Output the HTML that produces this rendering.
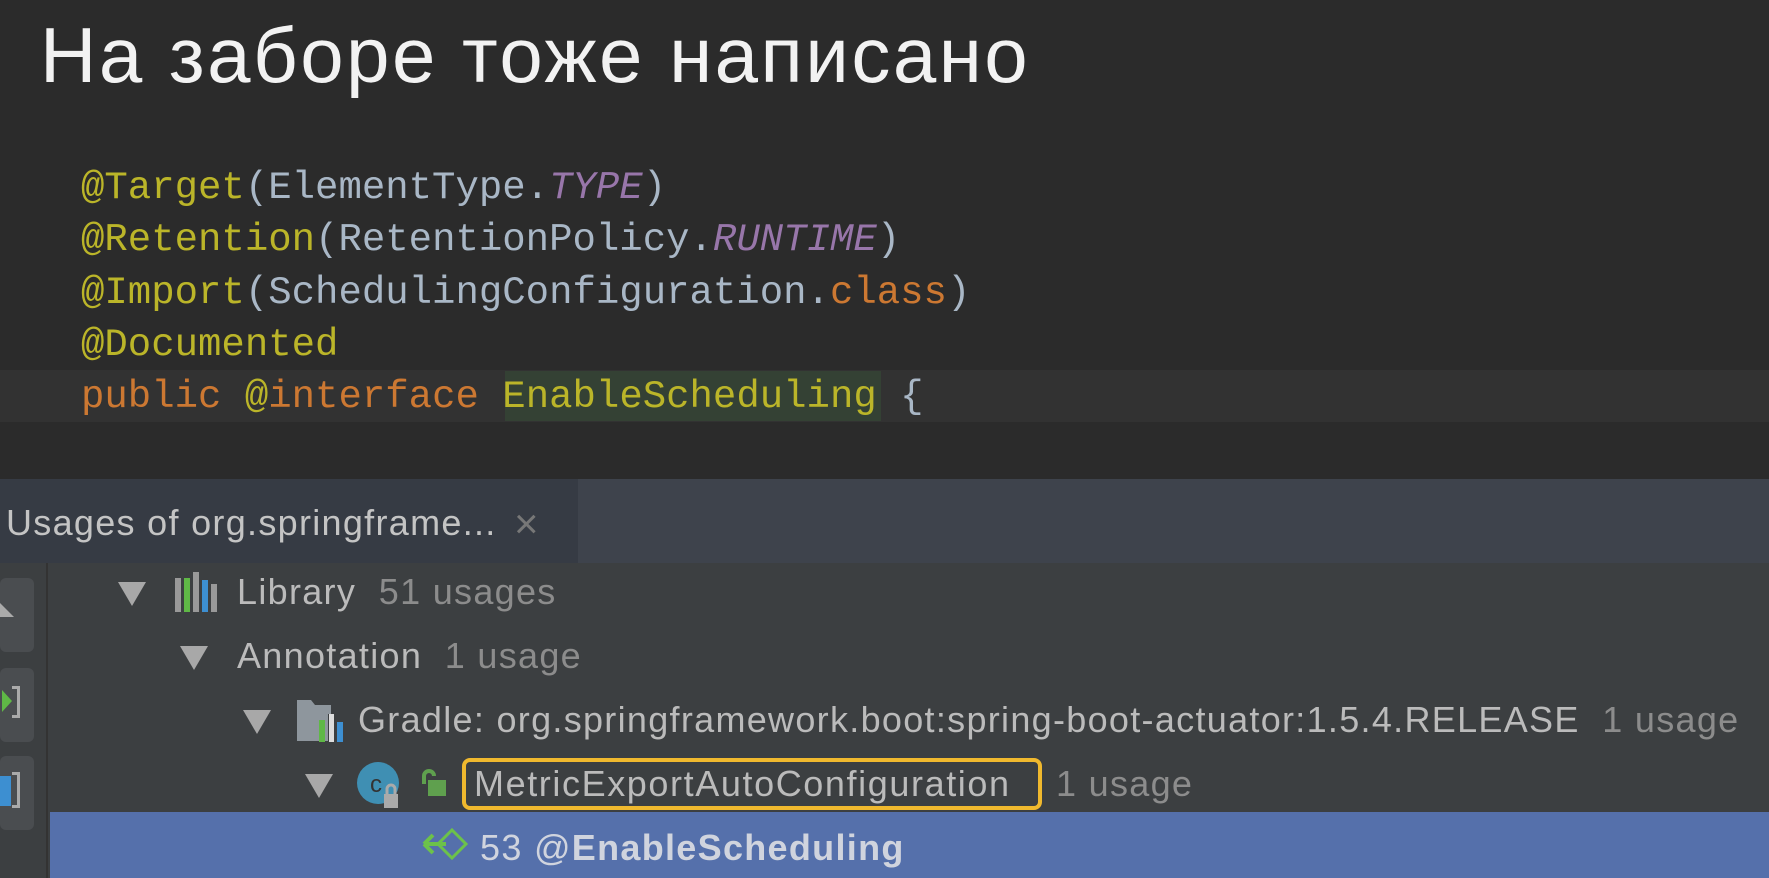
<!DOCTYPE html>
<html><head><meta charset="utf-8"><style>
*{margin:0;padding:0;box-sizing:border-box}
body{width:1769px;height:878px;overflow:hidden;background:#2b2b2b;position:relative;font-family:"Liberation Sans",sans-serif}
.a{position:absolute;white-space:nowrap}
.title{left:40px;top:10px;font-size:78px;color:#f2f2f2;letter-spacing:2.5px;line-height:90px}
.code{font-family:"Liberation Mono",monospace;font-size:39px;color:#a9b7c6;line-height:52px;left:81px}
.an{color:#bbb529}.kw{color:#cc7832}.st{color:#9876aa;font-style:italic}
.t{font-size:36px;color:#bbbbbb;letter-spacing:1.3px;line-height:40px}
.g{color:#8c8c8c}
.tri{width:0;height:0;border-left:14px solid transparent;border-right:14px solid transparent;border-top:24px solid #a8a8a8}
</style></head><body>
<div class="a title">На заборе тоже написано</div>
<div class="a" style="left:0;top:370px;width:1769px;height:52px;background:#323232"></div>
<div class="a" style="left:505px;top:371px;width:376px;height:50px;background:#344134"></div>
<div class="a code" style="top:162px"><span class="an">@Target</span>(ElementType.<span class="st">TYPE</span>)</div>
<div class="a code" style="top:214px"><span class="an">@Retention</span>(RetentionPolicy.<span class="st">RUNTIME</span>)</div>
<div class="a code" style="top:267px"><span class="an">@Import</span>(SchedulingConfiguration.<span class="kw">class</span>)</div>
<div class="a code" style="top:319px"><span class="an">@Documented</span></div>
<div class="a code" style="top:371px"><span class="kw">public</span> <span style="color:#bbb529">@</span><span class="kw">interface</span> <span class="an">EnableScheduling</span> {</div>

<div class="a" style="left:0;top:479px;width:1769px;height:84px;background:#3e434c"></div>
<div class="a" style="left:0;top:479px;width:578px;height:84px;background:#363b44"></div>
<div class="a t" style="left:6px;top:503px;color:#c4c4c4">Usages of org.springframe...</div>
<div class="a" style="left:514px;top:504px;font-size:42px;color:#777;line-height:40px">×</div>
<div class="a" style="left:0;top:563px;width:1769px;height:315px;background:#3c3f41"></div>
<div class="a" style="left:0;top:563px;width:48px;height:315px;background:#3c3f41;border-right:2px solid #333"></div>
<div class="a" style="left:0;top:578px;width:34px;height:74px;background:#4a4d50;border-radius:6px"></div>
<div class="a" style="left:0;top:603px;width:0;height:0;border-left:14px solid #aaa;border-top:14px solid transparent;border-bottom:0"></div>
<div class="a" style="left:0;top:668px;width:34px;height:74px;background:#4a4d50;border-radius:6px"></div>
<div class="a" style="left:2px;top:690px;border-left:10px solid #5fb846;border-top:11px solid transparent;border-bottom:11px solid transparent"></div>
<div class="a" style="left:12px;top:686px;width:8px;height:32px;border:3px solid #aaa;border-left:none"></div>
<div class="a" style="left:0;top:756px;width:34px;height:74px;background:#4a4d50;border-radius:6px"></div>
<div class="a" style="left:0;top:776px;width:11px;height:30px;background:#3d8fd1"></div>
<div class="a" style="left:12px;top:772px;width:8px;height:36px;border:3px solid #aaa;border-left:none"></div>

<div class="a" style="left:50px;top:812px;width:1719px;height:66px;background:#5570ab"></div>

<div class="a tri" style="left:118px;top:582px"></div>
<svg class="a" style="left:175px;top:572px" width="48" height="42"><rect x="0" y="6" width="6" height="34" fill="#999"/><rect x="9" y="6" width="6" height="34" fill="#5fb846"/><rect x="18" y="0" width="6" height="40" fill="#999"/><rect x="27" y="8" width="6" height="32" fill="#3d8fd1"/><rect x="36" y="12" width="6" height="28" fill="#999"/></svg>
<div class="a t" style="left:237px;top:572px">Library <span class="g">&nbsp;51 usages</span></div>
<div class="a tri" style="left:180px;top:646px"></div>
<div class="a t" style="left:237px;top:636px">Annotation <span class="g">&nbsp;1 usage</span></div>
<div class="a tri" style="left:243px;top:710px"></div>
<svg class="a" style="left:297px;top:698px" width="52" height="44"><path d="M0 2h14l4 5h16v36H0z" fill="#8e969d"/><rect x="22" y="22" width="6" height="22" fill="#5fb846"/><rect x="31" y="16" width="6" height="28" fill="#3c3f41"/><rect x="32" y="16" width="5" height="28" fill="#ddd"/><rect x="40" y="24" width="6" height="20" fill="#3d8fd1"/></svg>
<div class="a t" style="left:358px;top:700px">Gradle: org.springframework.boot:spring-boot-actuator:1.5.4.RELEASE <span class="g">&nbsp;1 usage</span></div>
<div class="a tri" style="left:305px;top:774px"></div>
<svg class="a" style="left:356px;top:760px" width="52" height="50"><circle cx="22" cy="23" r="21" fill="#3f8fb3"/><text x="14" y="32" font-family="Liberation Sans" font-size="24" fill="#333">c</text><rect x="28" y="34" width="14" height="14" fill="#aaa"/><path d="M31 34v-5a4 4 0 0 1 8 0v5" stroke="#aaa" stroke-width="3" fill="none"/></svg>
<svg class="a" style="left:420px;top:768px" width="28" height="30"><rect x="8" y="12" width="18" height="16" fill="#5fa04e"/><path d="M4 16v-8a5 5 0 0 1 10 0" stroke="#5fa04e" stroke-width="4" fill="none"/></svg>
<div class="a" style="left:462px;top:758px;width:580px;height:52px;border:4px solid #f0b92e;border-radius:8px"></div>
<div class="a t" style="left:474px;top:764px;letter-spacing:1.6px">MetricExportAutoConfiguration</div>
<div class="a t g" style="left:1056px;top:764px">1 usage</div>
<svg class="a" style="left:420px;top:828px" width="48" height="36"><path d="M4 16h22M4 16l9-9M4 16l9 9" stroke="#6cc24a" stroke-width="4" fill="none"/><path d="M32 2l14 14-14 14-14-14z" stroke="#6cc24a" stroke-width="3" fill="none"/></svg>
<div class="a t" style="left:480px;top:828px;color:#d0d4de">53 @<b>EnableScheduling</b></div>
</body></html>
